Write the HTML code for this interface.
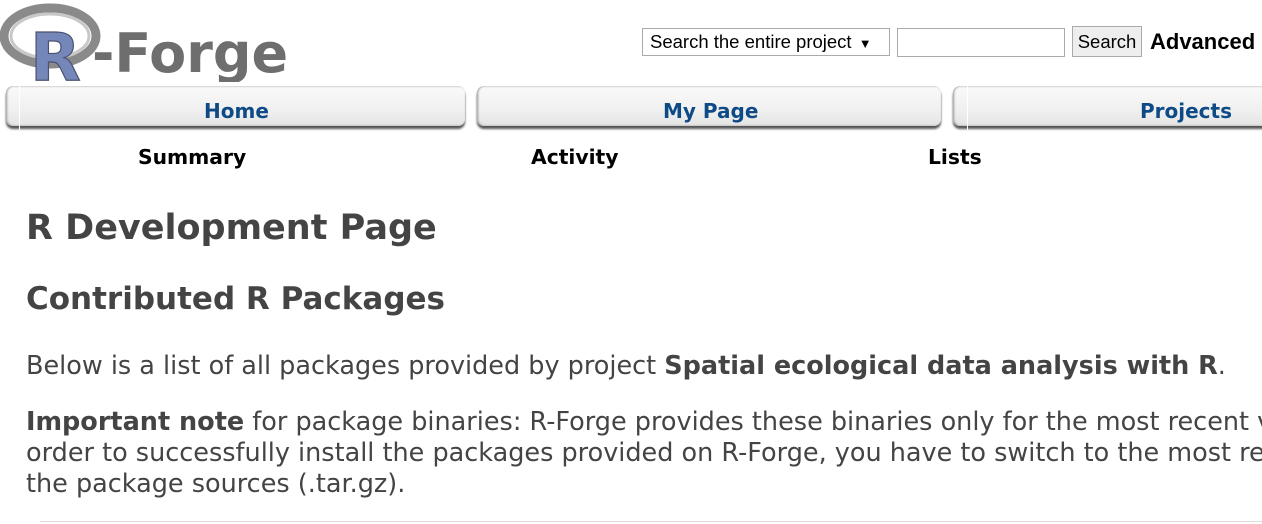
<!DOCTYPE html>
<html><head><style>
html,body{margin:0;width:1262px;height:524px;overflow:hidden}
body{background:#fff;font-family:"DejaVu Sans",sans-serif;color:#444;position:relative}
.abs{position:absolute}
.tab{position:absolute;top:86px;height:40px;border-radius:7px;background:linear-gradient(#fafafa,#f0f0f0 60%,#e4e4e4);box-shadow:0 3px 2px #555, inset 1px 0 2px #999;}
.tab span{position:absolute;top:13px;font-weight:bold;color:#0d4a86;font-size:20px}
.sub{position:absolute;top:145px;font-weight:bold;color:#000;font-size:20.3px}
</style></head><body>
<div class="abs" style="left:0;top:0;width:1262px;height:524px;overflow:hidden">
<svg class="abs" style="left:0;top:0" width="290" height="82">
<ellipse cx="50" cy="36" rx="46" ry="28" fill="none" stroke="#8a8a8a" stroke-width="9"/>
<ellipse cx="50" cy="36" rx="39" ry="22" fill="none" stroke="#c8c8c8" stroke-width="3"/>
<text x="30" y="80" font-family="DejaVu Sans" font-weight="bold" font-size="66" fill="#7587b8" stroke="#4a5270" stroke-width="1.2">R</text>
<text x="92" y="72" font-family="DejaVu Sans" font-weight="bold" font-size="54" fill="#6e6e6e">-Forge</text>
</svg>
<div class="abs" style="left:642px;top:28px;border:1px solid #aaa;font-family:'Liberation Sans',sans-serif;font-size:18.5px;color:#000;line-height:26px;padding-left:7px;box-sizing:border-box;width:248px;height:28px">Search the entire project <span style="font-size:13px;margin-left:2px">▼</span></div>
<div class="abs" style="left:897px;top:28px;width:168px;height:29px;border:1px solid #aaa;box-sizing:border-box"></div>
<div class="abs" style="left:1072px;top:26px;width:70px;height:31px;border:1px solid #aaa;background:#eee;box-sizing:border-box;font-family:'Liberation Sans',sans-serif;font-size:18.5px;color:#000;line-height:29px;text-align:center">Search</div>
<div class="abs" style="left:1150px;top:29px;font-family:'Liberation Sans',sans-serif;font-weight:bold;font-size:22px;color:#000">Advanced</div>
<div class="tab" style="left:6px;width:459px"><span style="left:198px">Home</span></div>
<div class="tab" style="left:477px;width:464px"><span style="left:186px">My Page</span></div>
<div class="tab" style="left:953px;width:330px"><span style="left:187px">Projects</span></div>
<div class="abs" style="left:19px;top:86px;width:1px;height:44px;background:#fff"></div>
<div class="abs" style="left:967px;top:86px;width:1px;height:44px;background:#fff"></div>
<div class="sub" style="left:138px">Summary</div>
<div class="sub" style="left:531px">Activity</div>
<div class="sub" style="left:928px">Lists</div>
<div class="abs" style="left:26px;top:208px;font-size:35px;font-weight:bold">R Development Page</div>
<div class="abs" style="left:26px;top:281px;font-size:31px;font-weight:bold">Contributed R Packages</div>
<div class="abs" style="left:26px;top:351px;font-size:25.5px;white-space:nowrap">Below is a list of all packages provided by project <b>Spatial ecological data analysis with R</b>.</div>
<div class="abs" style="left:26px;top:407px;font-size:25.5px;white-space:nowrap;line-height:31px"><b>Important note</b> for package binaries: R-Forge provides these binaries only for the most recent version of R<br>order to successfully install the packages provided on R-Forge, you have to switch to the most recent version of R<br>the package sources (.tar.gz).</div>
<div class="abs" style="left:40px;top:521px;width:1222px;height:1px;background:#ddd"></div>
</div>
</body></html>
